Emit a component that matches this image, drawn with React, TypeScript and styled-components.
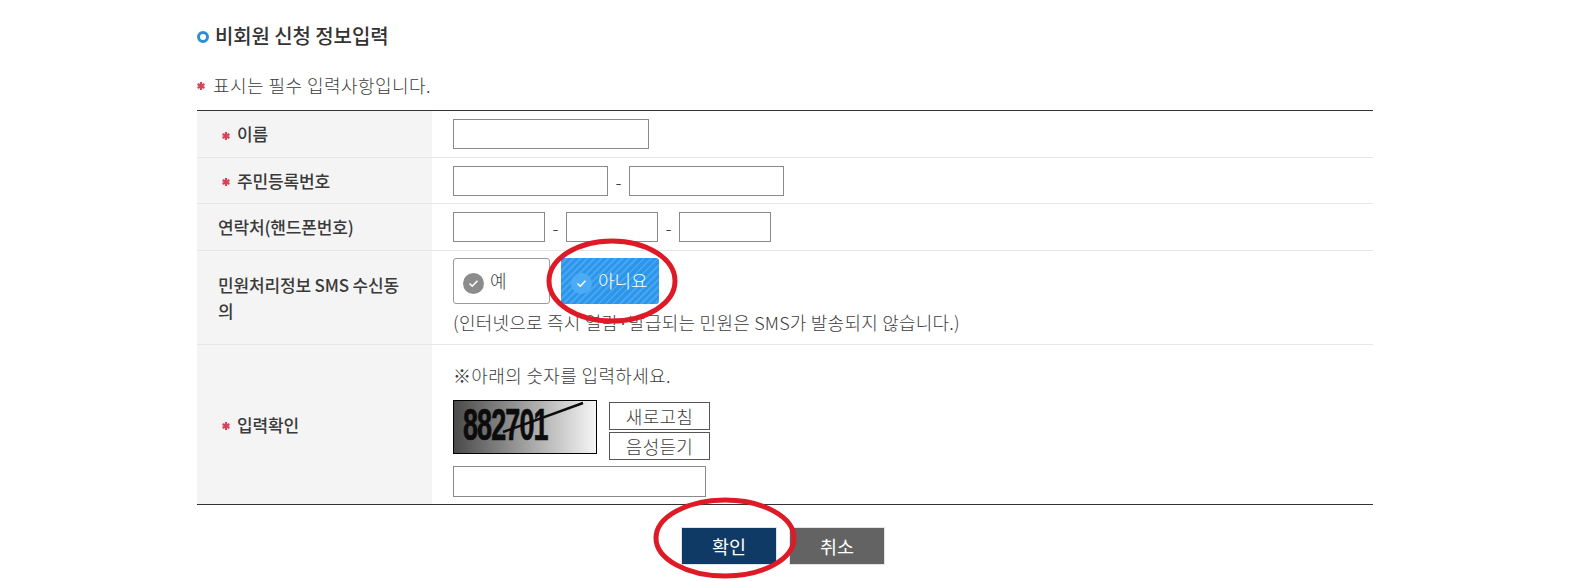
import React from "react";
import styled, { createGlobalStyle } from "styled-components";

const Global = createGlobalStyle`
  html, body { margin: 0; padding: 0; background: #fff; }
  body { font-family: "Noto Sans CJK KR", "Noto Sans", sans-serif; color: #333; }
  #root { position: relative; width: 1572px; height: 581px; overflow: hidden; }
`;

const Page = styled.main`
  width: 1176px;
  margin-left: 197px;
  padding-top: 21px;
`;

const Title = styled.h2`
  display: flex;
  align-items: center;
  gap: 6px;
  margin: 0;
  height: 28px;
  font-size: 20px;
  font-weight: 500;
  letter-spacing: -0.1px;
  color: #333;
`;

const Bullet = styled.span`
  width: 12px;
  height: 12px;
  box-sizing: border-box;
  border: 3px solid #2f8fd5;
  border-radius: 50%;
  margin-top: 3px;
`;

const Note = styled.p`
  display: flex;
  align-items: center;
  gap: 8px;
  margin: 22px 0 0;
  height: 27px;
  font-size: 18px;
  font-weight: 300;
  letter-spacing: 0.45px;
  color: #3c3c3c;
`;

const Table = styled.div`
  margin-top: 12px;
  border-top: 1px solid #333;
  border-bottom: 1px solid #333;
`;

const Row = styled.div<{ $h: number; $last?: boolean }>`
  display: grid;
  grid-template-columns: 235px 1fr;
  height: ${(p) => p.$h}px;
  box-sizing: border-box;
  border-bottom: ${(p) => (p.$last ? "none" : "1px solid #e6e6e6")};
`;

const Head = styled.div<{ $req?: boolean }>`
  display: flex;
  align-items: center;
  gap: 7px;
  padding: 0 28px 0 ${(p) => (p.$req ? 25 : 21)}px;
  background: #f4f4f4;
  font-size: 17px;
  font-weight: 500;
  line-height: 26px;
  letter-spacing: -0.15px;
  word-break: break-all;
  color: #3a3a3a;
`;

const Cell = styled.div`
  display: flex;
  flex-direction: column;
  justify-content: center;
  padding-left: 21px;
  font-size: 18px;
  font-weight: 300;
  color: #3c3c3c;
`;

const ChoiceCell = styled(Cell)`
  padding-bottom: 2px;
`;

const TopCell = styled(Cell)`
  justify-content: flex-start;
  padding-top: 17px;
`;

const Inline = styled.div`
  display: flex;
  align-items: center;
  gap: 7.5px;
`;

const Input = styled.input<{ $w: number }>`
  width: ${(p) => p.$w}px;
  height: 30px;
  box-sizing: border-box;
  border: 1px solid #8a8a8a;
  background: #fff;
  padding: 0 4px;
`;

const Choice = styled.button<{ $on?: boolean }>`
  display: flex;
  align-items: center;
  gap: 6px;
  width: ${(p) => (p.$on ? 98 : 97)}px;
  height: 46px;
  box-sizing: border-box;
  padding: 0 0 0 ${(p) => (p.$on ? 10 : 9)}px;
  border: ${(p) => (p.$on ? "none" : "1px solid #999")};
  border-radius: 3px;
  font-family: inherit;
  font-size: 18px;
  font-weight: 300;
  color: ${(p) => (p.$on ? "#fff" : "#3c3c3c")};
  background: ${(p) =>
    p.$on
      ? "repeating-linear-gradient(135deg, #2e96ea 0 3px, #46a6f0 3px 5px)"
      : "#fff"};
`;

const CheckDot = styled.span<{ $on?: boolean }>`
  display: flex;
  align-items: center;
  justify-content: center;
  width: 21px;
  height: 21px;
  margin-top: 5px;
  border-radius: 50%;
  background: ${(p) => (p.$on ? "#4cabf5" : "#8c8c8c")};
`;

const ChoiceLabel = styled.span`
  margin-top: -2px;
`;

const Choices = styled.div`
  display: flex;
  gap: 11px;
`;

const Hint = styled.div`
  margin-top: 4px;
  letter-spacing: 0.22px;
  line-height: 28px;
  height: 28px;
  white-space: nowrap;
`;

const Prompt = styled.div`
  letter-spacing: 0.35px;
  line-height: 26px;
  height: 26px;
`;

const CaptchaRow = styled.div`
  display: flex;
  gap: 12px;
  margin-top: 12px;
`;

const Captcha = styled.div`
  position: relative;
  width: 144px;
  height: 54px;
  box-sizing: border-box;
  border: 1px solid #000;
  background: linear-gradient(90deg, #4a4a4a, #f5f5f5);
  overflow: hidden;
`;

const CaptchaDigits = styled.span`
  position: absolute;
  left: 9px;
  top: 0;
  display: inline-block;
  font-family: "Liberation Sans", sans-serif;
  font-weight: 700;
  font-size: 45px;
  line-height: 48px;
  letter-spacing: -1.5px;
  color: #0c0c0c;
  -webkit-text-stroke: 0.7px #0c0c0c;
  transform: scaleX(0.6);
  transform-origin: left center;
`;

const CaptchaLine = styled.svg`
  position: absolute;
  inset: 0;
`;

const SideButtons = styled.div`
  display: flex;
  flex-direction: column;
  gap: 2px;
  margin-top: 2px;
`;

const SideButton = styled.button`
  width: 101px;
  height: 28px;
  box-sizing: border-box;
  border: 1px solid #555;
  background: #fff;
  padding: 0;
  font-family: inherit;
  font-size: 18px;
  letter-spacing: 0.3px;
  line-height: 24px;
  font-weight: 300;
  color: #3c3c3c;
`;

const CaptchaInput = styled(Input)`
  height: 31px;
  margin-top: 6px;
`;

const Actions = styled.div`
  display: flex;
  justify-content: center;
  gap: 12px;
  margin-top: 22px;
  padding-right: 4px;
`;

const Action = styled.button<{ $primary?: boolean }>`
  width: 96px;
  height: 38px;
  box-sizing: border-box;
  border: 1px solid #dfe3e6;
  background: ${(p) => (p.$primary ? "#0f3a66" : "#636363")};
  color: #fff;
  font-family: inherit;
  font-size: 18.5px;
  font-weight: 400;
  padding: 0;
`;

const Marks = styled.svg`
  position: absolute;
  left: 0;
  top: 0;
  pointer-events: none;
`;

const StarIcon = styled.svg`
  flex: none;
  margin-top: 3px;
`;

const Star = () => (
  <StarIcon width="8" height="8" viewBox="0 0 10 10">
    <g stroke="#d6455a" strokeWidth="2.8">
      <line x1="5" y1="0" x2="5" y2="10" />
      <line x1="0.7" y1="2.5" x2="9.3" y2="7.5" />
      <line x1="9.3" y1="2.5" x2="0.7" y2="7.5" />
    </g>
  </StarIcon>
);

const Check = () => (
  <svg width="11" height="9" viewBox="0 0 11 9" fill="none">
    <path d="M1.5 4.5 4.2 7.2 9.5 1.8" stroke="#fff" strokeWidth="1.6" />
  </svg>
);

export default function App() {
  return (
    <>
      <Global />
      <Page>
        <Title>
          <Bullet />
          비회원 신청 정보입력
        </Title>
        <Note>
          <Star />
          표시는 필수 입력사항입니다.
        </Note>
        <Table>
          <Row $h={47}>
            <Head $req>
              <Star />
              이름
            </Head>
            <Cell>
              <Input $w={196} />
            </Cell>
          </Row>
          <Row $h={46}>
            <Head $req>
              <Star />
              주민등록번호
            </Head>
            <Cell>
              <Inline>
                <Input $w={155} />-<Input $w={155} />
              </Inline>
            </Cell>
          </Row>
          <Row $h={47}>
            <Head>연락처(핸드폰번호)</Head>
            <Cell>
              <Inline>
                <Input $w={92} />-<Input $w={92} />-<Input $w={92} />
              </Inline>
            </Cell>
          </Row>
          <Row $h={94}>
            <Head>민원처리정보 SMS 수신동의</Head>
            <ChoiceCell>
              <Choices>
                <Choice>
                  <CheckDot>
                    <Check />
                  </CheckDot>
                  <ChoiceLabel>예</ChoiceLabel>
                </Choice>
                <Choice $on>
                  <CheckDot $on>
                    <Check />
                  </CheckDot>
                  <ChoiceLabel>아니요</ChoiceLabel>
                </Choice>
              </Choices>
              <Hint>(인터넷으로 즉시 열람·발급되는 민원은 SMS가 발송되지 않습니다.)</Hint>
            </ChoiceCell>
          </Row>
          <Row $h={159} $last>
            <Head $req>
              <Star />
              입력확인
            </Head>
            <TopCell>
              <Prompt>※아래의 숫자를 입력하세요.</Prompt>
              <CaptchaRow>
                <Captcha>
                  <CaptchaDigits>882701</CaptchaDigits>
                  <CaptchaLine width="142" height="52" viewBox="0 0 142 52">
                    <path d="M49 31 129 2" stroke="#0c0c0c" strokeWidth="2.4" />
                  </CaptchaLine>
                </Captcha>
                <SideButtons>
                  <SideButton>새로고침</SideButton>
                  <SideButton>음성듣기</SideButton>
                </SideButtons>
              </CaptchaRow>
              <CaptchaInput $w={253} />
            </TopCell>
          </Row>
        </Table>
        <Actions>
          <Action $primary>확인</Action>
          <Action>취소</Action>
        </Actions>
      </Page>
      <Marks width="1572" height="581" viewBox="0 0 1572 581" fill="none">
        <ellipse cx="612" cy="281" rx="63" ry="40" stroke="#dd1a26" strokeWidth="5" />
        <ellipse cx="725" cy="538" rx="69" ry="38" stroke="#dd1a26" strokeWidth="5" />
      </Marks>
    </>
  );
}
